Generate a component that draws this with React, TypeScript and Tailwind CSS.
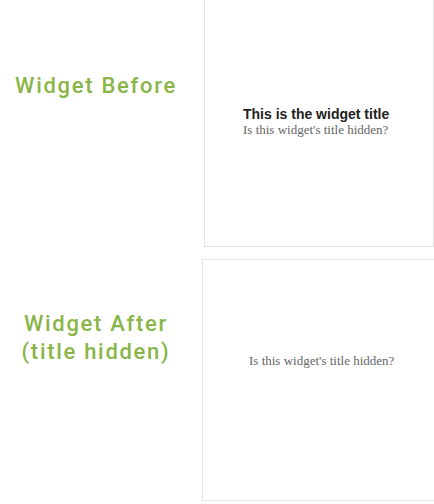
export default function App() {
  const label = "text-[#8ab548] text-[22px] leading-[28px] font-medium tracking-[1.7px] text-center";
  const labelFont = { fontFamily: "Roboto, 'Liberation Sans', sans-serif" };
  return (
    <div className="w-[434px] h-[504px] overflow-hidden bg-white">
      <div className="flex -mt-px">
        <div className="w-[204px] shrink-0 pt-[73px] pr-[12px]">
          <div className={label} style={labelFont}>Widget Before</div>
        </div>
        <div className="w-[230px] h-[248px] shrink-0 border border-[#e3e3e3] pt-[106px] pl-[38px]">
          <div className="text-[14px] leading-[16px] font-bold text-[#222222] font-['Liberation_Sans',Arial,sans-serif]">
            This is the widget title
          </div>
          <div className="text-[13px] leading-[16px] text-[#666666] font-['Liberation_Serif',serif]">
            Is this widget's title hidden?
          </div>
        </div>
      </div>
      <div className="flex mt-[12px]">
        <div className="w-[202px] shrink-0 pt-[51px] pr-[10px]">
          <div className={label} style={labelFont}>
            Widget After
            <br />
            (title hidden)
          </div>
        </div>
        <div className="w-[241px] h-[242px] shrink-0 border border-[#e3e3e3] pt-[93px] pl-[46px]">
          <div className="text-[13px] leading-[16px] text-[#666666] font-['Liberation_Serif',serif]">
            Is this widget's title hidden?
          </div>
        </div>
      </div>
    </div>
  );
}
